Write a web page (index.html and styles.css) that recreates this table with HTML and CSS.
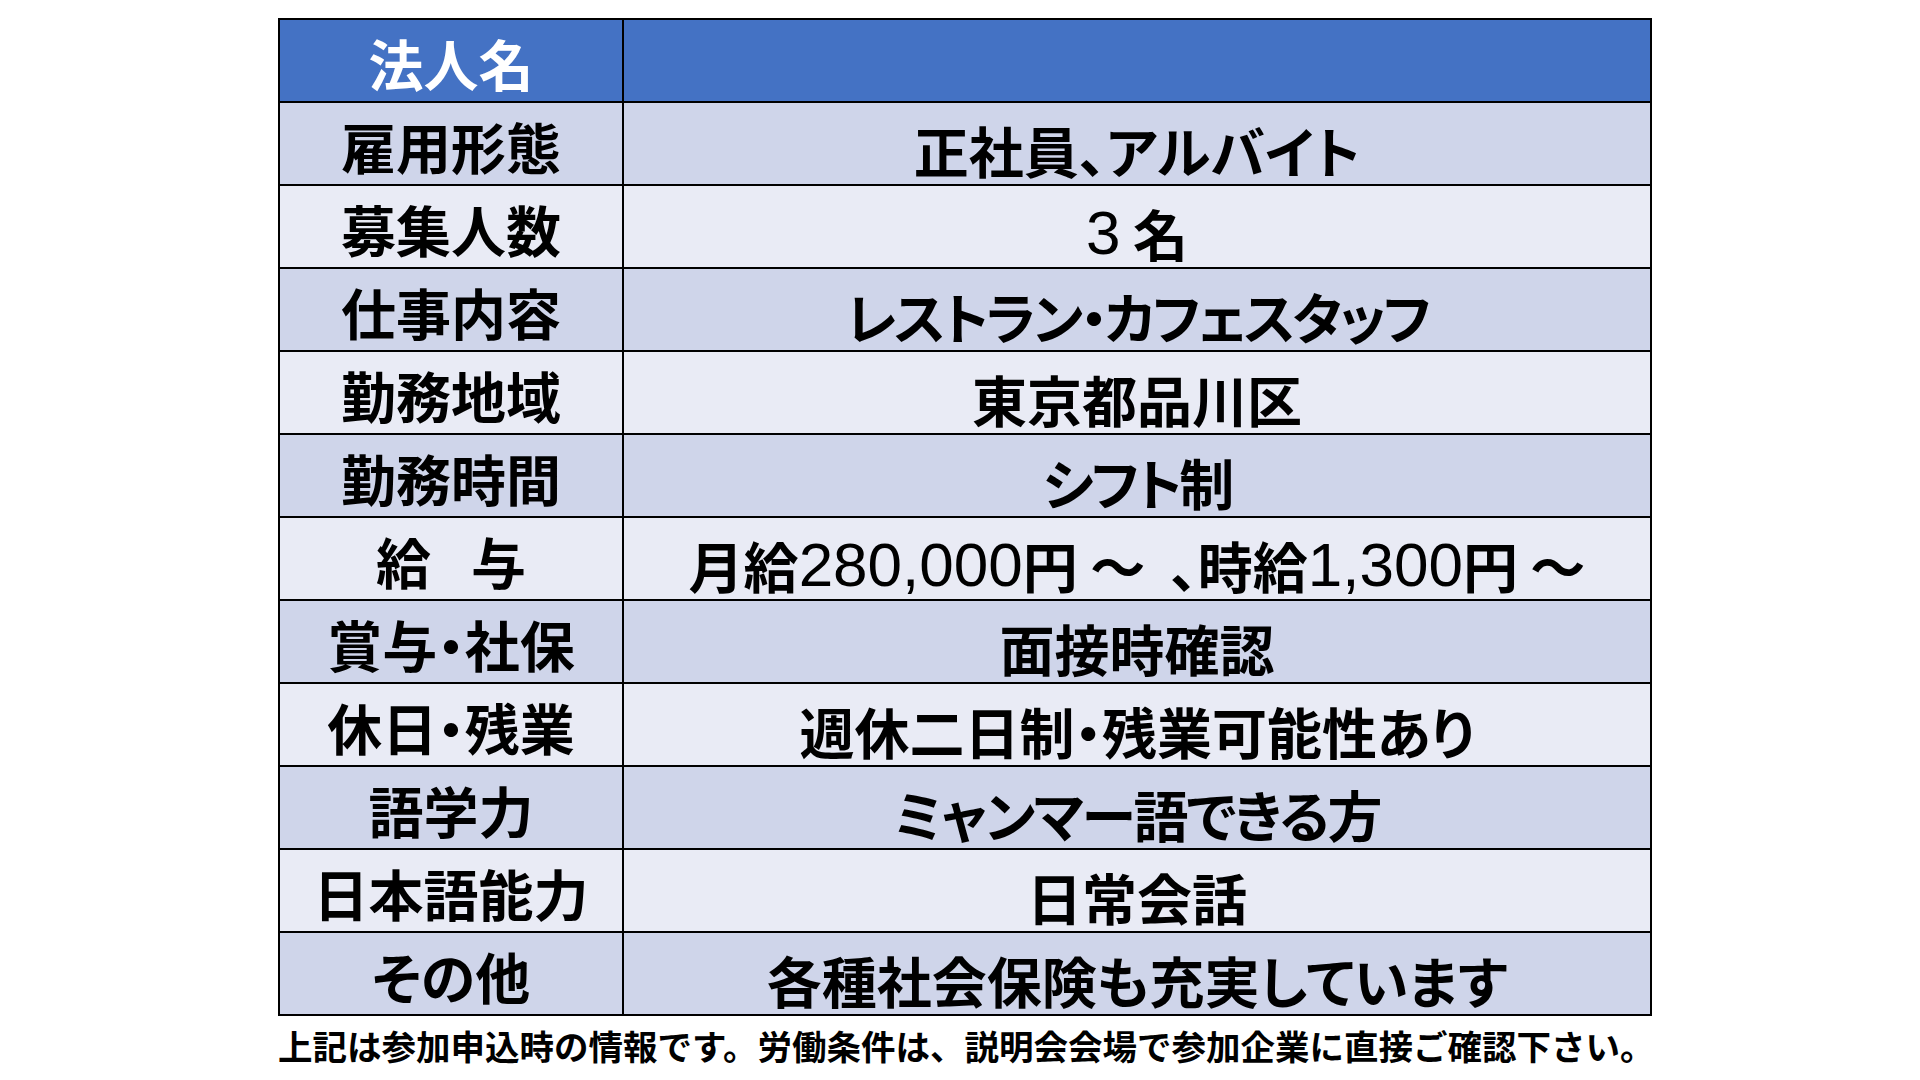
FILE: index.html
```html
<!DOCTYPE html>
<html lang="ja">
<head>
<meta charset="utf-8">
<title>求人情報</title>
<link rel="stylesheet" href="styles.css">
</head>
<body>
<main class="page">
  <div class="sheet">
    <div class="cell head label">法人名</div>
    <div class="cell head value"></div>

    <div class="cell dark label">雇用形態</div>
    <div class="cell dark value">正社員、アルバイト</div>

    <div class="cell light label">募集人数</div>
    <div class="cell light value"><span class="num">3</span>&nbsp;名</div>

    <div class="cell dark label">仕事内容</div>
    <div class="cell dark value tight">レストラン・カフェスタッフ</div>

    <div class="cell light label">勤務地域</div>
    <div class="cell light value">東京都品川区</div>

    <div class="cell dark label">勤務時間</div>
    <div class="cell dark value tight">シフト制</div>

    <div class="cell light label">給<span class="wsp">　</span>与</div>
    <div class="cell light value">月給<span class="num">280,000</span>円&nbsp;～&nbsp;&nbsp;、時給<span class="num">1,300</span>円&nbsp;～</div>

    <div class="cell dark label">賞与・社保</div>
    <div class="cell dark value">面接時確認</div>

    <div class="cell light label">休日・残業</div>
    <div class="cell light value">週休二日制・残業可能性あり</div>

    <div class="cell dark label">語学力</div>
    <div class="cell dark value semi">ミャンマー語できる方</div>

    <div class="cell light label">日本語能力</div>
    <div class="cell light value">日常会話</div>

    <div class="cell dark label">その他</div>
    <div class="cell dark value">各種社会保険も充実しています</div>
  </div>
  <p class="note">上記は参加申込時の情報です。労働条件は、説明会会場で参加企業に直接ご確認下さい。</p>
</main>
</body>
</html>
```

FILE: styles.css
```css
html, body {
  margin: 0;
  padding: 0;
  background: #ffffff;
}

body {
  width: 1920px;
  height: 1080px;
  overflow: hidden;
  font-family: "Noto Sans CJK JP", sans-serif;
  color: #000000;
}

.page {
  padding: 18px 0 0 278px;
}

.sheet {
  display: grid;
  grid-template-columns: 342px 1026px;
  grid-auto-rows: 81px;
  gap: 2px;
  padding: 2px;
  width: 1370px;
  background: #000000;
}

.cell {
  display: flex;
  align-items: center;
  justify-content: center;
  font-size: 55px;
  font-weight: 700;
  line-height: 1;
  white-space: nowrap;
  font-feature-settings: "palt";
}

.label {
  padding-top: 4px;
}

.value {
  padding-top: 12px;
}

.tight {
  letter-spacing: -3px;
}

.semi {
  letter-spacing: -2px;
}

.wsp {
  font-size: 40px;
}

.head {
  background: #4472c4;
  color: #ffffff;
}

.dark {
  background: #cfd5ea;
}

.light {
  background: #e9ebf5;
}

.num {
  font-family: "Liberation Sans", "Noto Sans CJK JP", sans-serif;
  font-weight: 400;
  font-size: 62px;
  line-height: 0;
}

.note {
  margin: 12px 0 0 0;
  font-size: 34.5px;
  font-weight: 700;
  line-height: 1;
  white-space: nowrap;
}
```
